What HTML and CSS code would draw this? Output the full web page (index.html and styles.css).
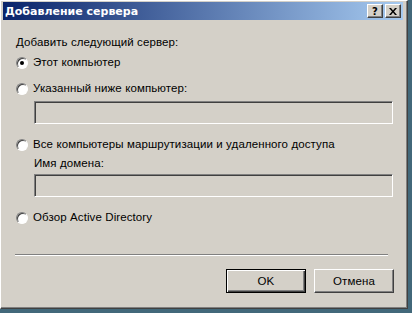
FILE: index.html
```html
<!DOCTYPE html>
<html lang="ru">
<head>
  <meta charset="UTF-8">
  <title>Добавление сервера</title>
  <link rel="stylesheet" href="styles.css">
</head>
<body>
  <div class="window">
    <div class="titlebar">
      <span class="title">Добавление сервера</span>
      <div class="title-buttons">
        <button class="tbtn">?</button>
        <button class="tbtn">
          <svg width="8" height="7" viewBox="0 0 8 7"><path d="M0 0h2l2 2.5L6 0h2L5 3.5 8 7H6L4 4.5 2 7H0l3-3.5z" fill="#000"/></svg>
        </button>
      </div>
    </div>
    <div class="content">
      <p class="intro">Добавить следующий сервер:</p>

      <label class="radio first"><span class="dot checked"></span>Этот компьютер</label>

      <label class="radio second"><span class="dot"></span>Указанный ниже компьютер:</label>
      <div class="field computer"></div>

      <label class="radio third"><span class="dot"></span>Все компьютеры маршрутизации и удаленного доступа</label>
      <p class="sublabel">Имя домена:</p>
      <div class="field domain"></div>

      <label class="radio fourth"><span class="dot"></span>Обзор Active Directory</label>

      <div class="separator"></div>

      <div class="actions">
        <button class="btn default">OK</button>
        <button class="btn">Отмена</button>
      </div>
    </div>
  </div>
</body>
</html>
```

FILE: styles.css
```css
body {
  margin: 0;
  background-color: #42687a;
  font-family: 'Liberation Sans', Arial, sans-serif;
  font-size: 11.5px;
  letter-spacing: 0.1px;
  color: #000;
}

.window {
  box-sizing: border-box;
  width: 408px;
  height: 309px;
  background-color: #d4d0c8;
  border-top: 1px solid #ffffff;
  border-left: 1px solid #ffffff;
  border-right: 1px solid #404040;
  border-bottom: 1px solid #404040;
  box-shadow: inset -1px -1px 0 #808080, inset 1px 1px 0 #d4d0c8;
  padding: 1px 4px 4px 2px;
}

.titlebar {
  height: 18px;
  background: linear-gradient(to right, #0a246a, #a6caf0);
  display: flex;
  align-items: center;
  justify-content: space-between;
  padding: 0 2px 0 2px;
}

.title {
  color: #fff;
  font-weight: bold;
  font-family: 'DejaVu Sans', sans-serif;
  font-size: 11px;
  letter-spacing: 0;
}

.title-buttons {
  display: flex;
  gap: 2px;
}

.tbtn {
  width: 16px;
  height: 14px;
  padding: 0;
  background-color: #d4d0c8;
  border: 1px solid;
  border-color: #ffffff #404040 #404040 #ffffff;
  box-shadow: inset -1px -1px 0 #808080;
  font-family: 'DejaVu Sans', sans-serif;
  font-weight: bold;
  font-size: 10px;
  line-height: 11px;
  display: flex;
  align-items: center;
  justify-content: center;
}

.content {
  display: flex;
  flex-direction: column;
  padding: 16px 10px 0 13px;
}

.intro {
  margin: 0;
  line-height: 13px;
}

.radio {
  display: flex;
  align-items: center;
  line-height: 13px;
}

.radio.first { margin-top: 7px; }
.radio.second { margin-top: 13px; }
.radio.third { margin-top: 14px; }
.radio.fourth { margin-top: 14px; }

.dot {
  width: 12px;
  height: 12px;
  box-sizing: border-box;
  border-radius: 50%;
  background-color: #fff;
  border: 1px solid;
  border-color: #808080 #ffffff #ffffff #808080;
  box-shadow: inset 1px 1px 0 #404040;
  margin-right: 5px;
  position: relative;
}

.dot.checked::after {
  content: "";
  position: absolute;
  left: 3px;
  top: 3px;
  width: 4px;
  height: 4px;
  border-radius: 50%;
  background-color: #000;
}

.field {
  margin-left: 18px;
  height: 23px;
  box-sizing: border-box;
  background-color: #d4d0c8;
  border: 1px solid;
  border-color: #808080 #ffffff #ffffff #808080;
  box-shadow: inset 1px 1px 0 #404040;
}

.field.computer { margin-top: 6px; }
.field.domain { margin-top: 4px; }

.sublabel {
  margin: 6px 0 0 18px;
  line-height: 13px;
}

.separator {
  margin: 30px 5px 0 -1px;
  height: 0;
  border-top: 1px solid #808080;
  border-bottom: 1px solid #ffffff;
}

.actions {
  display: flex;
  justify-content: flex-end;
  gap: 8px;
  margin: 13px -1px 0 0;
}

.btn {
  box-sizing: border-box;
  width: 80px;
  height: 24px;
  background-color: #d4d0c8;
  border: 1px solid;
  border-color: #ffffff #404040 #404040 #ffffff;
  box-shadow: inset -1px -1px 0 #808080;
  font-family: 'Liberation Sans', Arial, sans-serif;
  font-size: 11.5px;
  letter-spacing: 0.1px;
  padding: 0;
}

.btn.default {
  border-color: #000;
  box-shadow: inset 1px 1px 0 #ffffff, inset -1px -1px 0 #404040, inset -2px -2px 0 #808080;
}
```
